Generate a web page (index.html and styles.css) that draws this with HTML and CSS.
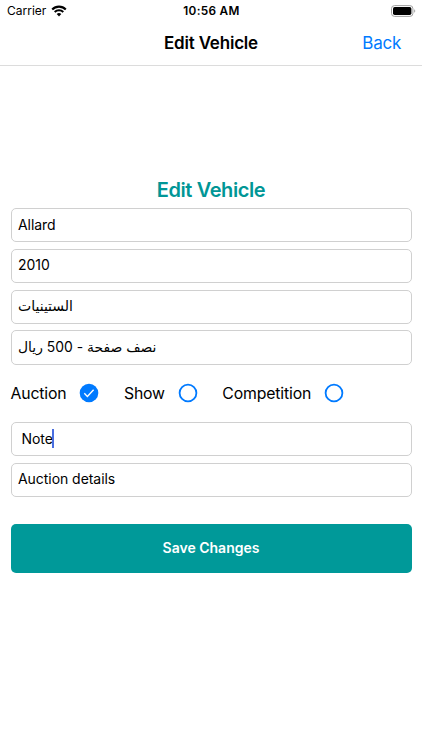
FILE: index.html
```html
<!DOCTYPE html>
<html lang="en">

<head>
    <meta charset="UTF-8">
    <meta name="viewport" content="width=device-width, initial-scale=1.0">
    <title>Edit Vehicle</title>
    <link rel="stylesheet" href="styles.css">
</head>

<body>
    <div class="status-bar">
        <div class="carrier">
            <span>Carrier</span>
            <svg class="wifi" width="16" height="12" viewBox="0 0 16 12">
                <path d="M1.2 4.4a9.6 9.6 0 0 1 13.6 0" fill="none" stroke="#000" stroke-width="2.1" />
                <path d="M3.7 7a6.1 6.1 0 0 1 8.6 0" fill="none" stroke="#000" stroke-width="2" />
                <path d="M8 11.4L5.7 9a3.3 3.3 0 0 1 4.6 0z" />
            </svg>
        </div>
        <span class="time">10:56 AM</span>
        <svg class="battery" width="25" height="12" viewBox="0 0 25 12">
            <rect x="0.5" y="0.6" width="21.4" height="10.8" rx="3" fill="#fff" stroke="#a0a0a0" />
            <rect x="2" y="2.1" width="18.4" height="7.8" rx="1.7" />
            <path d="M23.2 4.2c1.4.6 1.4 3 0 3.6z" fill="#a0a0a0" />
        </svg>
    </div>

    <div class="navbar">
        <h1>Edit Vehicle</h1>
        <a href="#" class="back">Back</a>
    </div>

    <div class="form">
        <h2>Edit Vehicle</h2>
        <div class="field"><span>Allard</span></div>
        <div class="field"><span>2010</span></div>
        <div class="field"><span class="arabic" lang="ar">الستينيات</span></div>
        <div class="field"><span class="arabic price" lang="ar">نصف صفحة - 500 ريال</span></div>

        <div class="options">
            <div class="option">
                <span>Auction</span>
                <svg width="20" height="20" viewBox="0 0 20 20">
                    <circle cx="10" cy="10" r="9.3" fill="#007aff" />
                    <path d="M5.3 10.3l3.1 3.1 6.2-6.7" fill="none" stroke="#fff" stroke-width="1.4" />
                </svg>
            </div>
            <div class="option">
                <span>Show</span>
                <svg width="20" height="20" viewBox="0 0 20 20">
                    <circle cx="10" cy="10" r="8.4" fill="none" stroke="#007aff" stroke-width="1.8" />
                </svg>
            </div>
            <div class="option">
                <span>Competition</span>
                <svg width="20" height="20" viewBox="0 0 20 20">
                    <circle cx="10" cy="10" r="8.4" fill="none" stroke="#007aff" stroke-width="1.8" />
                </svg>
            </div>
        </div>

        <div class="field note"><span>Note</span><i class="caret"></i></div>
        <div class="field"><span>Auction details</span></div>
        <button class="save-btn">Save Changes</button>
    </div>
</body>

</html>
```
FILE: styles.css
```css
* {
    margin: 0;
    padding: 0;
    box-sizing: border-box;
}

body {
    font-family: Inter, 'Noto Sans', 'DejaVu Sans', sans-serif;
    background-color: #fff;
    color: #000;
}

.status-bar {
    display: grid;
    grid-template-columns: 1fr auto 1fr;
    align-items: center;
    height: 22px;
    padding: 0 6px 0 7px;
}

.carrier {
    display: flex;
    align-items: center;
    gap: 4.5px;
    height: 21px;
    padding-bottom: 1px;
    font-size: 12px;
}

.time {
    font-size: 11.8px;
    font-weight: 600;
    letter-spacing: 0.3px;
}

.battery {
    justify-self: end;
    margin-bottom: 1px;
}

.navbar {
    display: grid;
    grid-template-columns: 1fr auto 1fr;
    align-items: center;
    height: 44px;
    padding: 0 21px 1px;
    border-bottom: 1px solid #dcdcdc;
}

.navbar h1 {
    grid-column: 2;
    font-size: 17px;
    font-weight: 600;
    letter-spacing: -0.2px;
}

.back {
    justify-self: end;
    color: #007aff;
    font-size: 17px;
    letter-spacing: -0.25px;
    text-decoration: none;
}

.form {
    display: flex;
    flex-direction: column;
    gap: 6.4px;
    padding: 111.6px 10.5px 0;
}

.form h2 {
    height: 24px;
    color: #009696;
    font-size: 20px;
    font-weight: 600;
    line-height: 24px;
    letter-spacing: -0.4px;
    text-align: center;
}

.field {
    display: flex;
    align-items: center;
    height: 34.4px;
    padding: 0 6.5px 2px;
    border: 1px solid #d0d0d0;
    border-radius: 5px;
    font-size: 14px;
    letter-spacing: -0.05px;
}

.arabic {
    font-family: Inter, 'DejaVu Sans', sans-serif;
}

.price {
    font-size: 13.9px;
}

.options {
    display: flex;
    align-items: center;
    gap: 24.7px;
    height: 44.4px;
}

.option {
    display: flex;
    align-items: center;
    gap: 12.7px;
    font-size: 15.8px;
    letter-spacing: -0.15px;
}

.option svg {
    flex: none;
    margin-bottom: 1px;
}

.note {
    padding-left: 10px;
}

.caret {
    width: 2px;
    height: 19px;
    margin-left: -0.5px;
    background-color: #4a6ee0;
}

.save-btn {
    height: 49px;
    margin-top: 20.2px;
    padding-bottom: 1px;
    background-color: #009999;
    color: white;
    border: none;
    border-radius: 5px;
    font-family: inherit;
    font-size: 14px;
    font-weight: 600;
}
```
